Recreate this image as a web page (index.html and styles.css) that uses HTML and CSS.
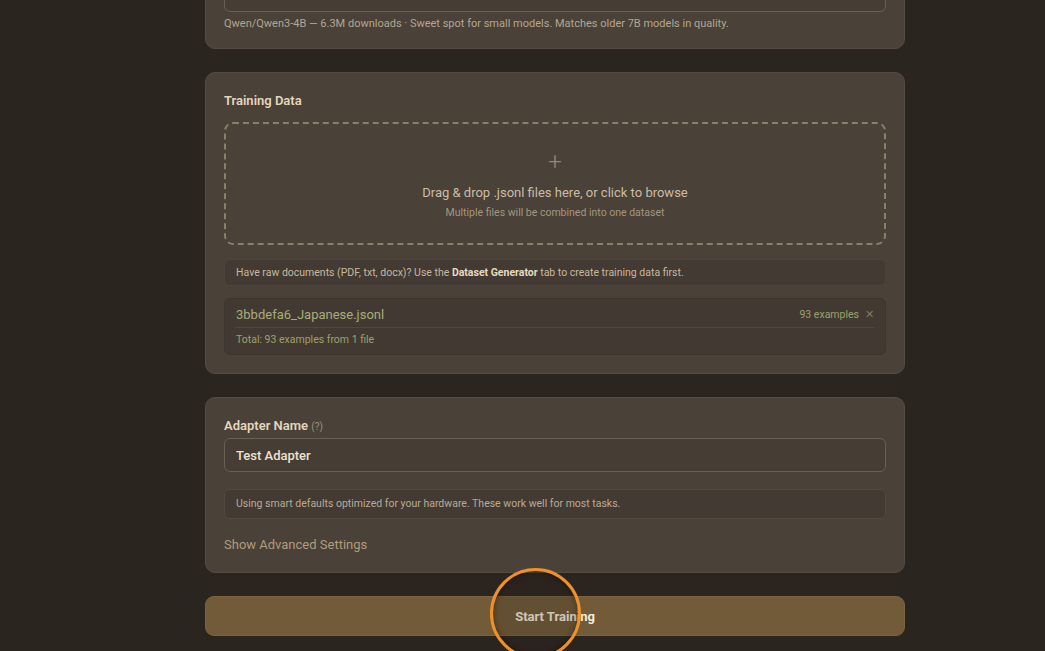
FILE: index.html
```html
<!DOCTYPE html>
<html lang="en">
<head>
<meta charset="utf-8">
<title>Training</title>
<link rel="stylesheet" href="styles.css">
</head>
<body>
<main class="page">
  <section class="card card-model">
    <div class="input input-model">[Qwen] Qwen3-4B</div>
    <p class="caption">Qwen/Qwen3-4B — 6.3M downloads · Sweet spot for small models. Matches older 7B models in quality.</p>
  </section>

  <section class="card card-data">
    <h2 class="label label-data">Training Data</h2>
    <div class="dropzone">
      <div class="plus">+</div>
      <div class="drop-main">Drag &amp; drop .jsonl files here, or click to browse</div>
      <div class="drop-sub">Multiple files will be combined into one dataset</div>
    </div>
    <p class="notice">Have raw documents (PDF, txt, docx)? Use the <b>Dataset Generator</b> tab to create training data first.</p>
    <div class="files">
      <div class="file-row">
        <span class="file-name">3bbdefa6_Japanese.jsonl</span>
        <span class="file-meta">93 examples <span class="file-x">✕</span></span>
      </div>
      <div class="file-total">Total: 93 examples from 1 file</div>
    </div>
  </section>

  <section class="card">
    <h2 class="label label-adapter">Adapter Name <span class="help">(?)</span></h2>
    <div class="input">Test Adapter</div>
    <p class="notice notice-defaults">Using smart defaults optimized for your hardware. These work well for most tasks.</p>
    <div class="advanced">Show Advanced Settings</div>
  </section>

  <div class="btn-wrap">
    <button class="start">Start Training</button>
    <span class="click-ring"></span>
  </div>
</main>
</body>
</html>
```

FILE: styles.css
```css
* { box-sizing: border-box; }
html, body { margin: 0; padding: 0; }
body {
  background: #2b2520;
  font-family: Roboto, "Noto Sans", sans-serif;
  color: #e2d6bf;
  height: 651px;
  overflow: hidden;
}
.page {
  width: 700px;
  margin: -67px 0 0 205px;
  display: flex;
  flex-direction: column;
  gap: 23px;
}
.card {
  background: #4a4139;
  border: 1px solid #554b42;
  border-radius: 10px;
  padding: 19px 18px 18px;
  display: flex;
  flex-direction: column;
}
.card-model { padding-top: 22px; }
.card-data { padding-bottom: 18px; }
.input {
  height: 34px;
  border: 1px solid #6a5f52;
  border-radius: 6px;
  background: #463d35;
  display: flex;
  align-items: center;
  padding: 0 11px;
  font-size: 13px;
  font-weight: 500;
  color: #ece2cf;
}
.input-model { height: 56px; align-items: flex-end; padding-bottom: 15px; }
.caption {
  margin: 5px 0 0;
  font-size: 11px;
  color: #b4a690;
}
.label {
  margin: 0;
  font-size: 13px;
  font-weight: 600;
  color: #e3d6bd;
  line-height: 18px;
}
.label-data { margin-bottom: 12px; }
.label-adapter { margin-bottom: 2px; }
.help { font-size: 10px; font-weight: 400; color: #9d907c; }
.dropzone {
  height: 123px;
  padding-top: 4px;
  border: 2px dashed #8b7e6a;
  border-radius: 9px;
  display: flex;
  flex-direction: column;
  align-items: center;
  justify-content: center;
}
.plus {
  font-size: 24px;
  font-weight: 300;
  line-height: 24px;
  color: #958871;
  margin-top: -2px;
}
.drop-main {
  margin-top: 11px;
  font-size: 13px;
  color: #cbbda4;
}
.drop-sub {
  margin-top: 6px;
  font-size: 10.5px;
  color: #a4967f;
}
.notice {
  margin: 14px 0 0;
  height: 27px;
  line-height: 25px;
  background: #433a33;
  border: 1px solid #4d443b;
  border-radius: 6px;
  padding: 0 11px;
  font-size: 10.5px;
  color: #c7b89e;
}
.notice b { color: #e6d9c0; font-weight: 700; }
.files {
  margin-top: 12px;
  background: #423a32;
  border: 1px solid #3d352e;
  border-radius: 6px;
  padding: 8px 11px 8px;
}
.file-row {
  display: flex;
  justify-content: space-between;
  align-items: center;
  padding-bottom: 5px;
  border-bottom: 1px solid #4f4a36;
}
.file-name { font-size: 13px; color: #a8ad78; }
.file-meta { font-size: 10.5px; color: #9ca16c; display: flex; align-items: center; gap: 6px; }
.file-x { font-size: 11px; color: #7f7a62; }
.file-total { margin-top: 5px; font-size: 10.5px; color: #9ca16c; }
.notice-defaults { margin-top: 17px; height: 30px; line-height: 28px; color: #b9ab93; border-color: #52483f; }
.advanced {
  margin-top: 18px;
  margin-bottom: 2px;
  font-size: 13px;
  color: #b09c7a;
}
.btn-wrap { position: relative; }
.start {
  display: block;
  width: 100%;
  height: 40px;
  border: 1px solid #7a6442;
  border-radius: 9px;
  background: #715b38;
  font-family: inherit;
  font-size: 13px;
  font-weight: 700;
  color: #f3ebdc;
}
.click-ring {
  position: absolute;
  left: 285px;
  top: -28px;
  width: 91px;
  height: 91px;
  border-radius: 50%;
  border: 3px solid #f0902a;
  background: rgba(40, 30, 20, 0.18);
  box-shadow: inset 0 0 6px rgba(0,0,0,0.35);
  pointer-events: none;
}
```
